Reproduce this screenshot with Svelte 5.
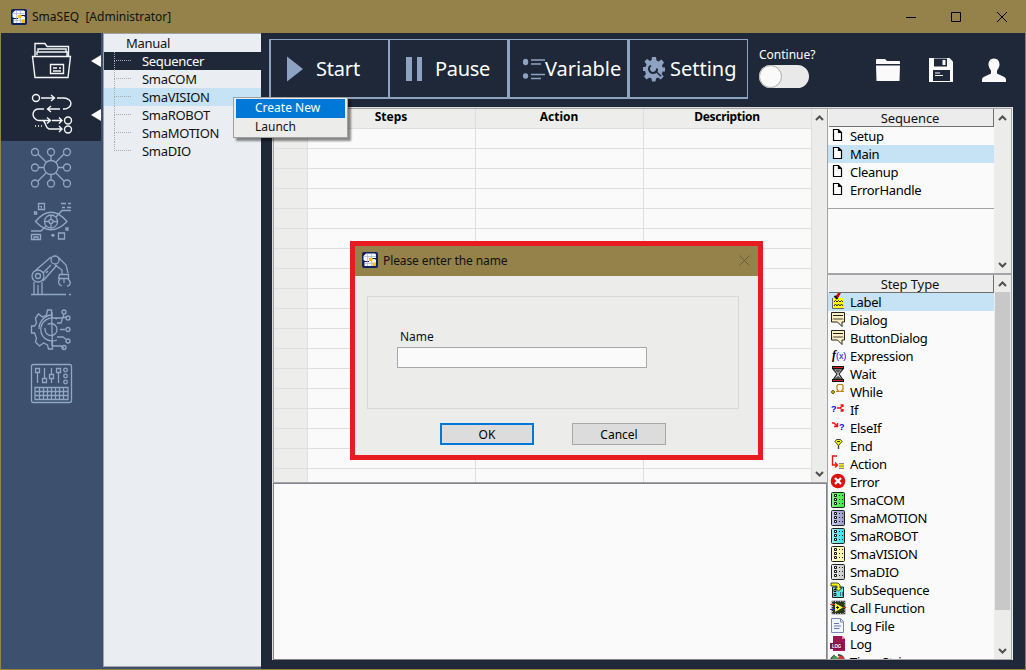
<script>
  const tree = ['Sequencer', 'SmaCOM', 'SmaVISION', 'SmaROBOT', 'SmaMOTION', 'SmaDIO'];
  const sequences = ['Setup', 'Main', 'Cleanup', 'ErrorHandle'];
  const rows = Array.from({ length: 18 }, (_, i) => i);

  const bubble = '<path d="M1.500.5h13v9.500h-2.500v4.500L7.500 10h-6z" fill="#fff0c4" stroke="#222"/><path d="M3 4l1-1 1 1 1-1 1 1 1-1 1 1 1-1 1 1 1-1 1 1M3 7.500l1-1 1 1 1-1 1 1 1-1 1 1 1-1 1 1 1-1 1 1" fill="none" stroke="#222"/>';
  const module = (c, d) => `<defs><linearGradient id="g${d.slice(1)}"><stop stop-color="${c}"/><stop offset="1" stop-color="${d}"/></linearGradient></defs><rect x="1.500" y=".5" width="13" height="15" rx="1" fill="url(#g${d.slice(1)})" stroke="#222"/><path d="M4.500 2.500h2v2h-2zM4.500 6.500h2v2h-2zM4.500 10.500h2v2h-2z" fill="#fff" stroke="#111"/><path d="M9 3.500h1m2 0h1M9 7.500h1m2 0h1M9 11.500h1m2 0h1" stroke="#222"/>`;
  const steps = [
    ['Label', '<path d="M2 4h12v10H2z" fill="#ff0"/><path d="M2.500 4v10.500H14" fill="none" stroke="#666"/><path d="M4 8l1.500-1.500L7 8l1.500-1.500L10 8l1.500-1.500L13 8M4 12l1.500-2L7 12l1.500-2L10 12l1.500-2L13 12" fill="none" stroke="#222"/><path d="M5 3l3-4h3L8 4z" fill="#c00"/><path d="M4.500 2l3 3" stroke="#111" stroke-width="2"/>'],
    ['Dialog', bubble],
    ['ButtonDialog', bubble],
    ['Expression', '<text x="2" y="10.500" font-family="Liberation Serif, serif" font-style="italic" font-weight="bold" font-size="12">f</text><text x="6" y="10.500" font-family="Liberation Sans, sans-serif" font-size="9" fill="#00c" textLength="10">(x)</text>'],
    ['Wait', '<path d="M3 3h10L9 8l4 6H3l4-6z" fill="#ddd" stroke="#222" stroke-width="1.200"/><path d="M5 4h6L8 7zM4 13l4-3 4 3z" fill="#555"/><path d="M2 1.500h12M2 14.500h12" stroke="#111" stroke-width="3"/><path d="M3 1.500h10M3 14.500h10" stroke="#d22" stroke-width="1.200"/>'],
    ['While', '<path d="M6 7.500h3l-2-2v-4l1-1h4l1 1v4l-2 2h3" fill="none" stroke="#c08010" stroke-width="1.200"/><path d="M3 6l2 2-2 2-2-2z" fill="#aa0" stroke="#552" stroke-width=".8"/>'],
    ['If', '<text x="1" y="10" font-family="Liberation Sans, sans-serif" font-weight="bold" font-size="9" fill="#00e">?</text><path d="M7 6h3l3-2.500M10 6l3 2.500M10.500 3H13v2M10.500 9H13V7" fill="none" stroke="#e11" stroke-width="1.300"/>'],
    ['ElseIf', '<path d="M2 3h2l3 3M4 6.500h3.500V3" fill="none" stroke="#e11" stroke-width="1.400"/><text x="9" y="10" font-family="Liberation Sans, sans-serif" font-weight="bold" font-size="9" fill="#00e">?</text>'],
    ['End', '<path d="M8.500 7v4" stroke="#444" stroke-width="1.400"/><path d="M6.500 1.500h4l1.500 2-3.500 4L5 3.500z" fill="#ff0" stroke="#443"/><path d="M7 3.500h3" stroke="#222"/>'],
    ['Action', '<path d="M7 0H2.500v9H7M5 6.500L7.500 9 5 11.500" fill="none" stroke="#e11" stroke-width="1.300"/><path d="M9 7h5v6H9z" fill="#ee0"/><path d="M9 7.500h5M9 10h5M9 12.500h5" stroke="#888"/>'],
    ['Error', '<circle cx="8" cy="7" r="7.300" fill="#e01010"/><path d="M5 4l6 6m0-6l-6 6" stroke="#fff" stroke-width="2.300"/>'],
    ['SmaCOM', module('#8dea91', '#2ef52e')],
    ['SmaMOTION', module('#d0d0ee', '#9494c8')],
    ['SmaROBOT', module('#a8eef0', '#1fe6f0')],
    ['SmaVISION', module('#fffbe0', '#fff79a')],
    ['SmaDIO', module('#eeeeee', '#c8c8c8')],
    ['SubSequence', '<path d="M2.500 5h11v10.500h-11z" fill="#5be4e8" stroke="#222"/><path d="M4 7.500h2v2H4zM4 11.500h2v2H4z" fill="#fff" stroke="#111"/><path d="M10 11h1m1 0h1m-3 2h1m1 0h1" stroke="#111"/><path d="M1 1h7l2 2v3h2L8.500 9 5 6h2V4H1z" fill="#ff0" stroke="#222" stroke-width=".8"/>'],
    ['Call Function', '<path d="M2.500 1.500h12v12h-12z" fill="#223b18" stroke="#333" stroke-width="1.600"/><path d="M2.500 1.500h12v12h-12z" fill="none" stroke="#bba" stroke-dasharray="1 1.500"/><path d="M0 4.500h5" stroke="#e22"/><path d="M0 9.500h5" stroke="#22e"/><path d="M5 3l8 4.500L5 12z" fill="#ff3"/><path d="M13 7.500h3" stroke="#d22"/><path d="M6 7.500h3M7.500 6v3" stroke="#222"/>'],
    ['Log File', '<path d="M1.500.5h9l3 3v11h-12z" fill="#f2f6ff" stroke="#7788b8"/><path d="M10.500 1v3H14" fill="none" stroke="#7788b8"/><path d="M4 5.500h5M4 8h7M4 10.500h5.500" stroke="#5878ba"/>'],
    ['Log', '<path d="M3 0h9l3 3v12H3z" fill="#9e164f"/><path d="M12 0v3h3z" fill="#d687a9"/><path d="M0 7h13v6H0z" fill="#811044"/><text x="2" y="11.500" font-family="Liberation Sans, sans-serif" font-weight="bold" font-size="4.500" fill="#fff">LOG</text>'],
    ['Time String', '<path d="M1 5l3-3 2 3M8 1a7 6 0 0 1 6 5" fill="none" stroke="#444" stroke-width="2"/><circle cx="5" cy="5" r="3" fill="#4a9a55"/><circle cx="11" cy="5" r="3" fill="#d33"/>']
  ];

  const rail = [
    '<g stroke="#f4f6f8" stroke-width="1.400"><path d="M35 56V43.500h10l2 3h21.500v9.500M37 55v-3h30v4M38 51v-2h28v3M32.500 56.500h38L68 77.500H35z"/><path d="M50.500 64.500h13v9h-13zM53 68h4m2 0h2M53 71h8"/></g>',
    '<g stroke="#f4f6f8" stroke-width="1.400"><circle cx="36" cy="98" r="3.500"/><path d="M41 98h13m-3-3l3.500 3-3.500 3M57 98h7c4 0 7 3 7 5.500s-3 5.500-7 5.500h-1M60 109H48m3-3l-3.500 3 3.500 3M44 109h-6c-3 0-5 3-5 5.500s3 6 6 6h11m-3-3l3.500 3-3.500 3M52 120.500h10m-3-3l3 3-3 3M43 121c3 0 2 8 7 8h12m-3-3l3 3-3 3M35 126h1m2 0h1m2 0h1"/><circle cx="68" cy="120.500" r="3.500"/><circle cx="68" cy="129.500" r="3.500"/></g>',
    '<g><circle cx="51" cy="167.500" r="7"/><path d="M38 154l8 8m18-8l-8 8M38 181l8-8m18 8l-8-8M51 155v5m0 15v5M39 167.500h5m14 0h5"/><circle cx="35" cy="152" r="3.500"/><circle cx="51" cy="152" r="3.500"/><circle cx="67" cy="152" r="3.500"/><circle cx="35" cy="167.500" r="3.500"/><circle cx="67" cy="167.500" r="3.500"/><circle cx="35" cy="183.500" r="3.500"/><circle cx="51" cy="183.500" r="3.500"/><circle cx="67" cy="183.500" r="3.500"/></g>',
    '<g><path d="M35.500 221.500Q51 203 67 221.500Q51 238 35.500 221.500z"/><circle cx="51" cy="221.500" r="6.500"/><circle cx="51" cy="221.500" r="2"/><path d="M51 215v4m0 5v4M45 221.500h4m4 0h5M56 217l6-6.500h9M62 207.500h3m2 0h4M61 203.500h5m2 0h3M46 226l-5 5H31M31.500 234.500h9v5h-9zM34 239v-2h4v2M38.500 203.500h6v6h-6zM58.500 233h6v6h-6zM34.500 212h2v2h-2zM66 228h2v2h-2z"/><path d="M39.500 206.500h2v2M51 235h3" stroke-width="1"/><circle cx="53" cy="235.300" r="1.500" fill="#91a7c6" stroke="none"/></g>',
    '<g><circle cx="38" cy="276" r="6"/><circle cx="38" cy="276" r="2.500"/><circle cx="55" cy="260" r="4"/><path d="M36 270l15-13M43 281l14-16M34 282v12M42 282v12M38 285v9M31 294.500h35m3 0h2M58 257l8 8 2 8M55 265l7 5v4M59.500 274.500h9v4h-10zM60 279c-3 3-1 6 2 7M68 279c4 3 2 7-1 7M64 279v4M43 273l8-8m-5 8l2-2"/></g>',
    '<g><path d="M51.500 310h-4l-1 5-4 2-4-3-3 4 1 5-2 3h-3v7h3l2 5-1 4 4 4 4-3 4 2 1 4h4z"/><path d="M51 315a14 14 0 0 0-12 14M57 319a11.500 11.500 0 1 0 0 21M52 312v6h10l5-1M52 346v-6M52 346h9l3 2M57 323h4l3-9M57 337h6l4 3M60 329.500h5"/><circle cx="51" cy="329.500" r="6" stroke-dasharray="20 4"/><circle cx="64" cy="312" r="2"/><circle cx="68" cy="318" r="2"/><circle cx="68" cy="329.500" r="2"/><circle cx="68" cy="341" r="2"/><circle cx="64" cy="347.500" r="2"/></g>',
    '<g><rect x="31.500" y="364.500" width="40" height="38" rx="2"/><path d="M35.500 368.500h4v4h-4zM42.500 378.500h4v4h-4zM49.500 374.500h4v4h-4zM56.500 368.500h4v4h-4zM37.500 373v10M44.500 368v10M51.500 368v6m0 5v4M58.500 373v10"/><circle cx="65.500" cy="370" r="1.800"/><circle cx="65.500" cy="376" r="1.800"/><circle cx="65.500" cy="382" r="1.800"/><path d="M35 387.500h33v12H35zM35 391.500h33M35 395.500h33M39.500 387v13M43.500 387v13M47.500 387v13M51.500 387v13M55.500 387v13M59.500 387v13M63.500 387v13"/></g>'
  ];
</script>

{#snippet logo()}
  <svg class="logo" width="16" height="16" viewBox="0 0 16 16">
    <rect width="16" height="16" rx="2" fill="#0c2360" />
    <path d="M4 1.500h9l1 1V6H8v1h5l1 1v6H2.500v-4H7V9H3L1.500 8V4z" fill="#f5f7fa" />
    <path d="M5.500 2v12M9.500 2v12M2 4.500h12M3 11.500h10" stroke="#a9b3cd" stroke-width=".7" />
    <path d="M7 6h3.500v3H7zM10.500 10.500H14V14h-3.500z" fill="#f6bd13" />
  </svg>
{/snippet}

{#snippet chevron(up)}
  <svg width="9" height="6" viewBox="0 0 9 6"><path d={up ? 'M1 5l3.500-3.500L8 5' : 'M1 1l3.500 3.500L8 1'} fill="none" stroke="#505050" stroke-width="2" /></svg>
{/snippet}

<div class="window">
  <header class="titlebar">
    {@render logo()}
    <span class="title">SmaSEQ&nbsp; [Administrator]</span>
    <svg class="winctl" width="120" height="32" viewBox="0 0 120 32" fill="none" stroke="#000">
      <path d="M6 16.500h10M51.500 11.500h9v9h-9zM97 11l10 10M107 11L97 21" />
    </svg>
  </header>

  <div class="body">
    <nav class="rail">
      {#each rail as art, i}
        <div class="slot" class:on={i < 2}>
          <svg width="44" height="54" viewBox="29 {33 + 54 * i} 44 54" fill="none" stroke="#91a7c6" stroke-width="1.300">{@html art}</svg>
          {#if i < 2}<i class="tri"></i>{/if}
        </div>
      {/each}
    </nav>

    <aside class="tree">
      <div class="root">Manual</div>
      {#each tree as t, i}
        <div class="node" class:dark={i === 0} class:hover={i === 2} class:last={i === 5}><i></i><span>{t}</span></div>
      {/each}
    </aside>

    <main>
      <div class="toolbar">
        <div class="buttons">
          <button class="b1"><svg width="16" height="26" viewBox="0 0 16 26"><path d="M0 .5v25L16 13z" fill="#8ea3c2" /></svg><span>Start</span></button>
          <button class="b2"><svg width="16" height="24"><path d="M0 0h6v24H0zM11 0h5v24h-5z" fill="#8ea3c2" /></svg><span>Pause</span></button>
          <button class="b3">
            <svg width="22" height="22" viewBox="0 0 22 22" stroke="#8ea3c2" stroke-width="1.400"><ellipse cx="2.500" cy="4" rx="2" ry="2.500" fill="#8ea3c2" /><ellipse cx="2.500" cy="18" rx="2" ry="2" fill="#8ea3c2" /><path d="M8 2h14M8 6h10M8 16.500h14M8 20.500h10" /></svg><span>Variable</span>
          </button>
          <button class="b4">
            <svg width="22" height="26" viewBox="0 0 22 26">
              <path d="M9 1h4l.5 3.500 2 1 3-2 2.500 3-2 3 .7 2H22v4h-2.300l-1 2.500 2 2.500-3 3-2.700-2-2 1-.5 3H9l-.5-3-2-1-3 2-2.500-3 2-2.500L2 15H0v-4h2.500l1-2.500-2-3 2.500-2.500 3 2 1.500-.7z" fill="#8ea3c2" />
              <path d="M8 9.500a4 4 0 1 0 6 3" fill="none" stroke="#1e2838" stroke-width="2" /><path d="M12.500 15.500l5.500 5" stroke="#1e2838" stroke-width="2" /><path d="M13 17l5 4.500" stroke="#8ea3c2" />
            </svg><span>Setting</span>
          </button>
        </div>
        <div class="cont"><span>Continue?</span><div class="toggle"><i></i></div></div>
        <div class="quick">
          <svg width="26" height="26" viewBox="0 0 26 26"><path d="M1 7V3q0-1 1-1h8l2 2h12q1 0 1 1v2z M1 8.500h24L24.500 24h-23z" fill="#fafafa" /></svg>
          <svg width="26" height="26" viewBox="0 0 26 26"><path d="M1 1h20.500L25 4.500V25H1z" fill="#fafafa" /><path d="M6 1.500h13v8H6zM5 13h17v11H5z" fill="#1e2838" /><path d="M14.500 3h3v5h-3z" fill="#fafafa" /><path d="M7 16h5M7 18.500h8" stroke="#fafafa" stroke-width="1.200" /></svg>
          <svg width="26" height="26" viewBox="0 0 26 26"><path d="M13 1.500c4 0 5.500 3 5.500 6 0 2-1 4-2.500 6v3c3 2 9 3 9 6V25H1v-2.500c0-3 6-4 9-6v-3c-1.500-2-2.500-4-2.500-6 0-3 1.500-6 5.500-6z" fill="#fafafa" /></svg>
        </div>
      </div>

      <div class="work">
        <section class="left">
          <div class="gridbox">
            <div class="grid">
              <div class="row head"><b></b><b>Steps</b><b>Action</b><b class="desc">Description</b></div>
              {#each rows as _}
                <div class="row"><i></i><i></i><i></i><i></i></div>
              {/each}
            </div>
            <div class="scroll">{@render chevron(true)}{@render chevron(false)}</div>
          </div>
          <div class="output"></div>
        </section>
        <section class="right">
          <div class="panel seq">
            <div class="list">
              <div class="lh">Sequence</div>
              {#each sequences as s, i}
                <div class="item" class:sel={i === 1}>
                  <svg width="16" height="16" viewBox="0 0 16 16"><path d="M3.500 2.500h5l3 3v8h-8zM8.500 2.500v3h3" fill="#fff" stroke="#000" stroke-width="1.200" /></svg>
                  <span>{s}</span>
                </div>
              {/each}
              <div class="rule"></div>
            </div>
            <div class="scroll">{@render chevron(true)}{@render chevron(false)}</div>
          </div>
          <div class="panel types">
            <div class="list">
              <div class="lh">Step Type</div>
              {#each steps as [name, art], i}
                <div class="item" class:sel={i === 0}><svg width="16" height="16" viewBox="0 0 16 16">{@html art}</svg><span>{name}</span></div>
              {/each}
            </div>
            <div class="scroll">{@render chevron(true)}<div class="thumb"></div>{@render chevron(false)}</div>
          </div>
        </section>
      </div>
    </main>
  </div>

  <div class="menu"><div class="mi act">Create New</div><div class="mi">Launch</div></div>

  <div class="dialog">
    <div class="dtitle">{@render logo()}<span>Please enter the name</span>
      <svg width="11" height="11" viewBox="0 0 11 11"><path d="M.5.5l10 10m0-10l-10 10" stroke="#6b5d36" /></svg>
    </div>
    <div class="dbody">
      <div class="group"><label for="nm">Name</label><input id="nm" /></div>
      <div class="acts"><button class="ok">OK</button><button>Cancel</button></div>
    </div>
  </div>
</div>

<style>
  :global(body) { margin: 0; overflow: hidden; }
  .window, .window * { box-sizing: border-box; }
  .window { position: relative; width: 1026px; height: 670px; display: flex; flex-direction: column; overflow: hidden; background: #1e2838; border: 1px solid #94824a; border-top: 0; font: 13px/18px "Noto Sans", "Open Sans", sans-serif; color: #111; }
  button { font: inherit; padding: 0; margin: 0; border-radius: 0; }
  svg { display: block; flex: none; }
  .titlebar { height: 33px; flex: none; background: #94824a; display: flex; align-items: center; padding-left: 10px; gap: 5px; font-size: 12px; }
  .title { flex: 1; white-space: pre; }
  .winctl { margin-right: 5px; }
  .body { flex: 1; min-height: 0; display: flex; }
  .rail { width: 102px; background: #3d516e; flex: none; }
  .slot { height: 54px; width: 100px; display: flex; align-items: center; padding-left: 28px; }
  .on { background: #1e2838; }
  .tri { margin-left: 18px; margin-top: 1px; border: 6px solid transparent; border-left: 0; border-right: 10px solid #fff; }
  .tree { width: 158px; flex: none; background: #eaeef3; border-left: 1px solid #a0a3a8; border-top: 1px solid #a0a3a8; border-bottom: 1px solid #a0a3a8; box-shadow: 0 2px #3d516e; margin-bottom: 2px; }
  .root { height: 18px; padding-left: 22px; letter-spacing: -.3px; }
  .node { height: 18px; display: flex; position: relative; padding-left: 10px; gap: 11px; letter-spacing: -.3px; }
  .node i { width: 17px; height: 9px; border-bottom: 1px dotted #aaa; border-left: 1px dotted #aaa; }
  .node::after { content: ""; position: absolute; left: 10px; top: 9px; height: 9px; border-left: 1px dotted #aaa; }
  .last::after { display: none; }
  .dark { background: #1e2838; color: #fff; }
  .hover, .sel { background: #c5e3f5; }
  main { flex: 1; display: flex; flex-direction: column; min-width: 0; }
  .toolbar { height: 74px; flex: none; display: flex; align-items: flex-start; padding: 6px 18px 0 8px; color: #fff; }
  .buttons { display: flex; height: 60px; border: solid #8ea3c2; border-width: 1px 1px 2px 2px; }
  .buttons button { height: 57px; background: #1e2838; border: solid #8ea3c2; border-width: 0 3px 0 0; width: 120px; display: flex; align-items: center; color: #fff; font-size: 20px; line-height: 28px; }
  .buttons .b1 { width: 119px; border-right-width: 2px; padding-left: 16px; gap: 13px; letter-spacing: -.2px; }
  .buttons .b2 { padding-left: 16px; gap: 13px; letter-spacing: -.3px; }
  .buttons .b3 { padding-left: 13px; }
  .buttons .b4 { width: 117px; border-right: 0; padding-left: 13px; gap: 5px; }
  .cont { margin: 6px 0 0 11px; font-size: 12px; line-height: 19px; width: 109px; }
  .toggle { width: 50px; height: 23px; margin-top: 1px; border-radius: 12px; background: #e9e9e9; }
  .toggle i { display: block; width: 23px; height: 23px; border-radius: 50%; background: #fafafa; border: 1px solid #aaa; }
  .quick { display: flex; gap: 27px; padding-top: 18px; margin-left: 7px; }
  .work { flex: 1; margin: 0 12px 9px 11px; min-height: 0; display: flex; background: #ececec; border-left: 1px solid #ddd; border-top: 1px solid #ddd; }
  .left { width: 554px; display: flex; flex-direction: column; }
  .gridbox { height: 375px; border: 1px solid #a4a4a8; border-right: 0; display: flex; overflow: hidden; background: #ececea; }
  .grid { width: 538px; flex: none; }
  .row { display: grid; grid-template-columns: 34px 168px 168px 168px; height: 20px; background: #fafafa; }
  .row > * { border-right: 1px solid #dedede; border-bottom: 1px solid #dedede; }
  .row > :first-child, .head { background: #ededeb; }
  .head { font-size: 12px; line-height: 16px; text-align: center; color: #000; }
  .head b { padding-right: 1px; }
  .desc { letter-spacing: -.3px; }
  .scroll { width: 15px; background: #ececea; display: flex; flex-direction: column; align-items: center; justify-content: space-between; padding: 6px 0 5px; flex: none; }
  .output { flex: 1; background: #fafafa; border: 1px solid #848488; }
  .right { flex: 1; display: flex; flex-direction: column; min-width: 0; border-right: 1px solid #eee; }
  .panel { display: flex; border: 1px solid #a4a4a8; background: #ececea; overflow: hidden; min-height: 0; }
  .seq { height: 166px; flex: none; }
  .types { flex: 1; }
  .list { width: 166px; flex: none; background: #fafafa; letter-spacing: -.3px; }
  .lh { height: 18px; margin-left: 1px; background: #ececec; border: solid #707070; border-width: 0 1px 1px 0; text-align: center; line-height: 18px; padding-right: 2px; letter-spacing: -.1px; }
  .item { height: 18px; display: flex; padding-left: 2px; gap: 4px; color: #000; white-space: pre; }
  .item svg { overflow: visible; margin-top: 1px; }
  .seq .item svg { margin-top: 0; }
  .panel .scroll { margin-left: 1px; }
  .rule { border-top: 1px solid #a4a4a8; margin-top: 9px; }
  .thumb { width: 15px; height: 318px; background: #c8c8c8; margin: 5px 0 auto; }
  .menu { position: absolute; left: 232px; top: 97px; width: 115px; height: 41px; padding: 1px 2px; background: #ececea; border: 1px solid #a0a0a0; box-shadow: 3px 3px 2px rgba(0, 0, 0, .45); font-size: 12px; }
  .mi { height: 19px; line-height: 17px; padding-left: 19px; }
  .act { background: #0078d7; color: #fff; }
  .dialog { position: absolute; left: 349px; top: 241px; width: 413px; height: 219px; border: 5px solid #e81b23; background: #ececea; font-size: 12px; }
  .dtitle { height: 30px; background: #94824a; display: flex; align-items: center; padding: 0 8px 2px 7px; gap: 5px; }
  .dtitle span { flex: 1; padding-top: 2px; letter-spacing: -.1px; }
  .dbody { padding: 20px 19px 0 12px; }
  .group { height: 113px; border: 1px solid #d8d8d8; padding: 31px 0 0 29px; }
  label { display: block; padding-left: 3px; height: 19px; }
  input { display: block; width: 250px; height: 21px; border: 1px solid #a8a8ac; background: #fafafa; padding: 0; }
  .acts { display: flex; gap: 38px; padding: 14px 0 0 73px; }
  .acts button { width: 94px; height: 22px; border: 1px solid #a8a8a8; background: #dcdcdc; color: #000; line-height: 20px; padding-top: 1px; }
  .acts .ok { border: 2px solid #0078d7; line-height: 18px; }
</style>
